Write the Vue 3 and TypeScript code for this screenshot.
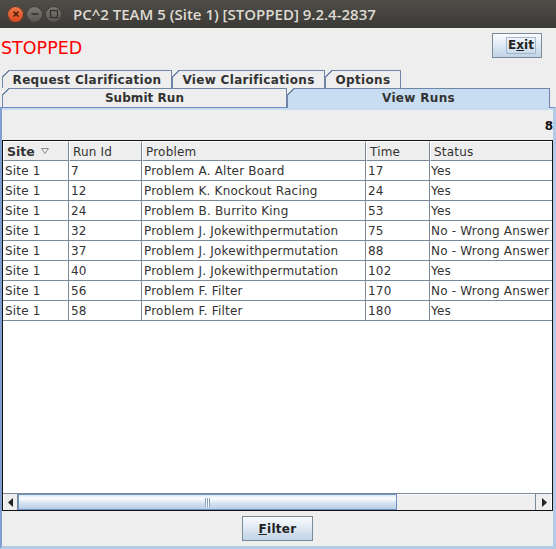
<script setup lang="ts">
interface Run {
  site: string
  id: number
  problem: string
  time: number
  status: string
}

const runs: Run[] = [
  { site: 'Site 1', id: 7, problem: 'Problem A. Alter Board', time: 17, status: 'Yes' },
  { site: 'Site 1', id: 12, problem: 'Problem K. Knockout Racing', time: 24, status: 'Yes' },
  { site: 'Site 1', id: 24, problem: 'Problem B. Burrito King', time: 53, status: 'Yes' },
  { site: 'Site 1', id: 32, problem: 'Problem J. Jokewithpermutation', time: 75, status: 'No - Wrong Answer' },
  { site: 'Site 1', id: 37, problem: 'Problem J. Jokewithpermutation', time: 88, status: 'No - Wrong Answer' },
  { site: 'Site 1', id: 40, problem: 'Problem J. Jokewithpermutation', time: 102, status: 'Yes' },
  { site: 'Site 1', id: 56, problem: 'Problem F. Filter', time: 170, status: 'No - Wrong Answer' },
  { site: 'Site 1', id: 58, problem: 'Problem F. Filter', time: 180, status: 'Yes' },
]
</script>

<template>
  <div class="window">
    <header class="titlebar">
      <div class="controls">
        <span class="ctl close">
          <svg width="10" height="10" viewBox="0 0 10 10"><path d="M2.500 2.500l5 5M7.500 2.500l-5 5" stroke="#4a1d0c" stroke-width="1.500" /></svg>
        </span>
        <span class="ctl">
          <svg width="10" height="10" viewBox="0 0 10 10"><path d="M1.500 5h7" stroke="#2f2e2a" stroke-width="1.500" /></svg>
        </span>
        <span class="ctl">
          <svg width="10" height="10" viewBox="0 0 10 10"><rect x="1.500" y="1.500" width="7" height="7" fill="none" stroke="#2f2e2a" stroke-width="1.200" /></svg>
        </span>
      </div>
      <span class="title">PC^2 TEAM 5 (Site 1) [STOPPED] 9.2.4-2837</span>
    </header>

    <div class="top">
      <span class="state">STOPPED</span>
      <button class="btn exit"><span class="focus">E<u>x</u>it</span></button>
    </div>

    <div class="tabs">
      <div class="tabrow first">
        <div class="tab t1">Request Clarification</div>
        <div class="tab t2">View Clarifications</div>
        <div class="tab t3">Options</div>
      </div>
      <div class="tabrow second">
        <div class="tab t4">Submit Run</div>
        <div class="tab t5 on">View Runs</div>
      </div>
    </div>

    <main class="panel">
      <div class="band"></div>
      <div class="count">8</div>
      <div class="grid">
        <div class="thead row">
          <div class="th sorted">Site <svg width="8" height="6" viewBox="0 0 8 6"><path d="M.5.5h7L4 5.500z" fill="none" stroke="#8a8a8a" /></svg></div>
          <div class="th">Run Id</div>
          <div class="th">Problem</div>
          <div class="th">Time</div>
          <div class="th">Status</div>
        </div>
        <div class="tbody">
          <div v-for="r in runs" :key="r.id" class="row data">
            <div class="td">{{ r.site }}</div>
            <div class="td">{{ r.id }}</div>
            <div class="td">{{ r.problem }}</div>
            <div class="td">{{ r.time }}</div>
            <div class="td">{{ r.status }}</div>
          </div>
        </div>
        <div class="hscroll">
          <div class="arrow">
            <svg width="6" height="9" viewBox="0 0 6 9"><path d="M5 0v9L0 4.500z" fill="#222" /></svg>
          </div>
          <div class="thumb"><span class="grip"></span></div>
          <div class="track"></div>
          <div class="arrow right">
            <svg width="6" height="9" viewBox="0 0 6 9"><path d="M1 0v9l5-4.500z" fill="#222" /></svg>
          </div>
        </div>
      </div>
      <div class="bottom">
        <button class="btn filter"><u>F</u>ilter</button>
      </div>
    </main>
  </div>
</template>

<style>
html,
body {
  margin: 0;
  height: 549px;
  overflow: hidden;
  background: #eeeeee;
}
</style>

<style scoped>
.window {
  width: 556px;
  height: 549px;
  display: flex;
  flex-direction: column;
  overflow: hidden;
  background: #eeeeee;
  font-family: 'DejaVu Sans', sans-serif;
  font-size: 12px;
  color: #333333;
}

.titlebar {
  height: 28px;
  flex: none;
  display: flex;
  align-items: center;
  box-sizing: border-box;
  padding-left: 7px;
  background: linear-gradient(#4e4d48, #3b3a36);
}
.controls {
  display: flex;
  gap: 2px;
}
.ctl {
  width: 17px;
  height: 17px;
  border-radius: 50%;
  display: flex;
  align-items: center;
  justify-content: center;
  background: linear-gradient(#7c7b75, #55544f);
  box-shadow: inset 0 0 0 1px #3a3935;
}
.ctl.close {
  background: linear-gradient(#f0784a, #d9481c);
}
.title {
  margin-left: 11px;
  font-family: 'Open Sans', sans-serif;
  font-size: 15px;
  font-weight: 600;
  color: #dfdbd2;
  white-space: nowrap;
}

.top {
  height: 42px;
  flex: none;
  display: flex;
  justify-content: space-between;
  padding-left: 1px;
  padding-right: 14px;
  box-sizing: border-box;
}
.state {
  margin-top: 10px;
  font-size: 17.5px;
  line-height: 20px;
  color: #ff0000;
}
.btn {
  font-family: inherit;
  font-size: 12px;
  font-weight: bold;
  color: #222222;
  box-sizing: border-box;
  border: 1px solid #7a8a99;
  background: linear-gradient(#fbfcfe, #dde8f3 50%, #c0d3e6);
  padding: 0;
}
.exit {
  width: 50px;
  height: 25px;
  margin-top: 5px;
  padding-left: 8px;
}
.focus {
  display: inline-block;
  border: 1px solid #a3b8cc;
  padding: 0 1px;
  line-height: 15px;
}

.tabs {
  flex: none;
}
.tabrow {
  display: flex;
  padding-left: 2px;
}
.first {
  height: 18px;
}
.second {
  height: 19px;
}
.tab {
  position: relative;
  box-sizing: border-box;
  border: 1px solid #6f86a8;
  border-bottom: 0;
  font-weight: bold;
  font-size: 12px;
  letter-spacing: 0.33px;
  line-height: 18px;
  text-align: center;
  color: #333333;
  white-space: nowrap;
}
.tab::before {
  content: '';
  position: absolute;
  left: -1px;
  top: -1px;
  width: 7px;
  height: 7px;
  background: linear-gradient(135deg, #eeeeee 0 46%, #6f86a8 46% 58%, transparent 58%);
}
.t1 {
  width: 170px;
}
.t2 {
  width: 153px;
}
.t3 {
  width: 76px;
}
.t4 {
  width: 285px;
  letter-spacing: 0.05px;
}
.t5 {
  width: 263px;
}
.on {
  height: 20px;
  z-index: 1;
  background: #c8ddf2;
}

.panel {
  flex: 1;
  min-height: 0;
  display: flex;
  flex-direction: column;
  box-sizing: border-box;
  border-style: solid;
  border-width: 1px 3px 3px 2px;
  border-color: #6f8cc0 #b3cbe4 #b3cbe4 #7f9fd2;
}
.band {
  height: 2px;
  flex: none;
  background: #c8ddf2;
}
.count {
  height: 30px;
  flex: none;
  box-sizing: border-box;
  padding-top: 9px;
  text-align: right;
  font-weight: bold;
  line-height: 15px;
  color: #111111;
}
.grid {
  height: 371px;
  flex: none;
  display: flex;
  flex-direction: column;
  box-sizing: border-box;
  border: 1px solid #111111;
  background: #ffffff;
}
.row {
  display: grid;
  grid-template-columns: 66px 73px 224px 64px 1fr;
}
.thead {
  height: 20px;
  flex: none;
}
.th {
  box-sizing: border-box;
  display: flex;
  align-items: center;
  gap: 6px;
  padding-left: 3px;
  padding-top: 2px;
  background: #eeeeee;
  border-top: 1px solid #ffffff;
  border-left: 1px solid #ffffff;
  border-right: 1px solid #7a8a99;
  border-bottom: 1px solid #7a8a99;
  color: #333333;
  letter-spacing: 0.2px;
}
.sorted {
  padding-top: 0;
  font-weight: bold;
  font-size: 12.5px;
  letter-spacing: 0;
}
.tbody {
  flex: 1;
  min-height: 0;
}
.data {
  height: 20px;
}
.td {
  box-sizing: border-box;
  padding-left: 2px;
  line-height: 21px;
  border-right: 1px solid #7a8a99;
  border-bottom: 1px solid #7a8a99;
  white-space: nowrap;
  overflow: hidden;
  letter-spacing: 0.2px;
}
.td:last-child,
.th:last-child {
  border-right: 0;
}
.td:last-child {
  padding-left: 1px;
}
.hscroll {
  height: 17px;
  flex: none;
  display: flex;
  background: #eeeeee;
  border-top: 1px solid #7a8a99;
  box-sizing: border-box;
}
.arrow {
  width: 15px;
  flex: none;
  display: flex;
  align-items: center;
  justify-content: center;
  border-right: 1px solid #7a8a99;
  border-left: 1px solid #ffffff;
  box-sizing: border-box;
  background: #eeeeee;
}
.arrow.right {
  width: 17px;
  border-left: 1px solid #7a8a99;
  border-right: 1px solid #ffffff;
}
.thumb {
  width: 379px;
  flex: none;
  box-sizing: border-box;
  display: flex;
  align-items: center;
  justify-content: center;
  background: linear-gradient(#dfe9f4, #fbfcfe 25%, #d3e2f1 60%, #b8cee4);
  border: 1px solid #6f92c8;
}
.grip {
  width: 5px;
  height: 9px;
  background: repeating-linear-gradient(90deg, #8aa3bd 0 1px, #ffffff 1px 2px);
}
.track {
  flex: 1;
  border-top: 1px solid #ffffff;
}

.bottom {
  flex: 1;
  display: flex;
  justify-content: center;
  padding-top: 5px;
  box-sizing: border-box;
}
.filter {
  width: 71px;
  height: 25px;
  letter-spacing: 0.3px;
}
</style>
